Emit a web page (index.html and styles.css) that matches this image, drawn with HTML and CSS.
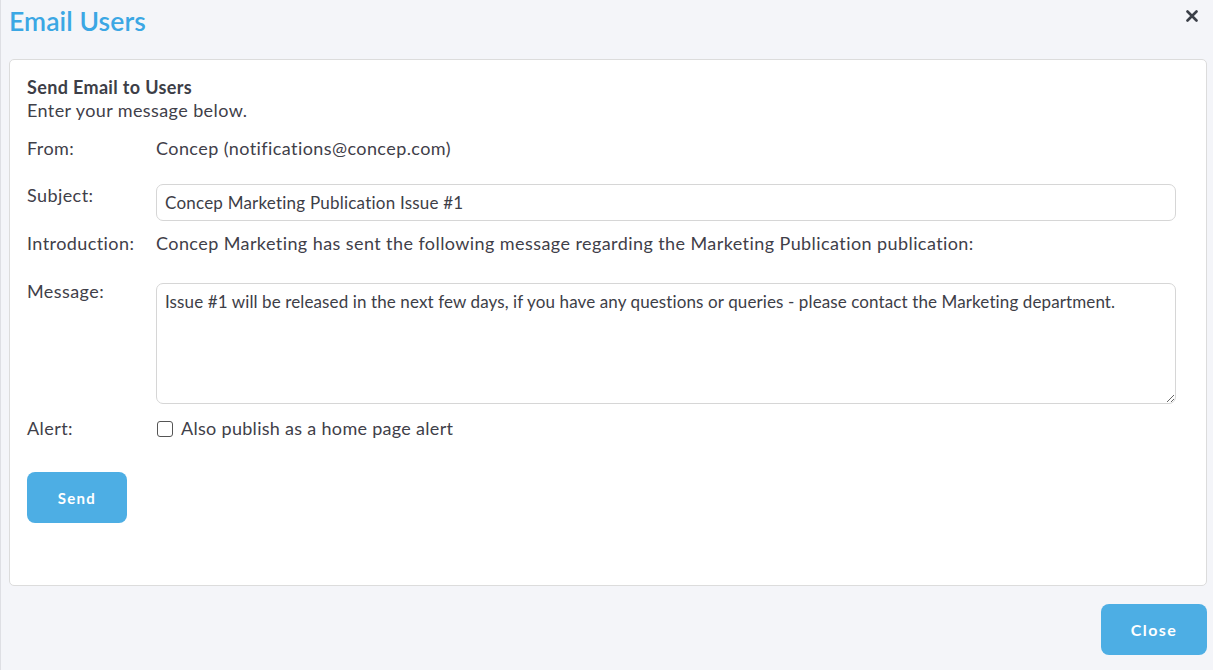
FILE: index.html
```html
<!DOCTYPE html>
<html lang="en">
<head>
<meta charset="utf-8">
<title>Email Users</title>
<link rel="stylesheet" href="styles.css">
</head>
<body>
<div class="modal">
  <header class="modal-header">
    <h1 class="modal-title">Email Users</h1>
    <button class="close-x" aria-label="Close">
      <svg width="12" height="12" viewBox="0 0 12 12"><path d="M1.5 1.5 L10.5 10.5 M10.5 1.5 L1.5 10.5" stroke="#3b3f48" stroke-width="2.6" stroke-linecap="round"/></svg>
    </button>
  </header>
  <section class="card">
    <h2 class="card-title">Send Email to Users</h2>
    <p class="card-sub">Enter your message below.</p>
    <div class="row row-from">
      <div class="label">From:</div>
      <div class="value">Concep (notifications@concep.com)</div>
    </div>
    <div class="row row-subject">
      <div class="label">Subject:</div>
      <input class="field" type="text" value="Concep Marketing Publication Issue #1">
    </div>
    <div class="row row-intro">
      <div class="label">Introduction:</div>
      <div class="value">Concep Marketing has sent the following message regarding the Marketing Publication publication:</div>
    </div>
    <div class="row row-message">
      <div class="label label-msg">Message:</div>
      <textarea class="field area">Issue #1 will be released in the next few days, if you have any questions or queries - please contact the Marketing department.</textarea>
    </div>
    <div class="row row-alert">
      <div class="label">Alert:</div>
      <label class="check"><input type="checkbox" class="checkbox"><span>Also publish as a home page alert</span></label>
    </div>
    <button class="btn btn-send">Send</button>
  </section>
  <footer class="modal-footer">
    <button class="btn btn-close">Close</button>
  </footer>
</div>
</body>
</html>
```
FILE: styles.css
```css
* { box-sizing: border-box; }
html, body { margin: 0; padding: 0; }
body {
  background: #f4f5f9;
  font-family: Lato, "Open Sans", sans-serif;
  color: #3f4049;
  width: 1213px;
  height: 670px;
  overflow: hidden;
}
.modal {
  height: 670px;
  border-left: 1px solid #dedfe4;
  padding: 0 6px 0 8px;
}
.modal-header {
  display: flex;
  align-items: flex-start;
  justify-content: space-between;
  height: 59px;
}
.modal-title {
  margin: 5px 0 0 0;
  font-size: 26.5px;
  font-weight: 600;
  color: #3ba7e4;
  line-height: 32px;
  letter-spacing: 0.1px;
}
.close-x {
  background: none;
  border: 0;
  padding: 0;
  margin: 10px 9px 0 0;
  width: 12px;
  height: 12px;
  display: flex;
  cursor: pointer;
}
.card {
  background: #fff;
  border: 1px solid #dcdcdc;
  border-radius: 5px;
  height: 527px;
  padding: 16px 17px 0 17px;
}
.card-title {
  margin: 0;
  font-size: 18px;
  font-weight: 700;
  line-height: 23px;
  letter-spacing: 0.35px;
  color: #3d3e47;
}
.card-sub {
  margin: 0;
  font-size: 18px;
  line-height: 23px;
  letter-spacing: 0.4px;
}
.row {
  display: flex;
  align-items: flex-start;
  font-size: 18px;
  line-height: 23px;
  letter-spacing: 0.42px;
}
.label {
  width: 129px;
  flex: none;
}
.value { flex: 1; }
.row-from { margin-top: 15px; }
.row-subject { margin-top: 24px; }
.row-intro { margin-top: 11px; }
.row-message { margin-top: 25px; }
.row-message .area { margin-top: 3px; }
.row-alert { margin-top: 13px; }
.field {
  width: 1020px;
  font-family: Lato, "Open Sans", sans-serif;
  font-size: 17px;
  letter-spacing: 0.11px;
  color: #3d3e47;
  border: 1px solid #d6d6d6;
  border-radius: 7px;
  background: #fff;
  outline: none;
}
input.field {
  height: 37px;
  padding: 0 8px;
  letter-spacing: 0.22px;
}
.area {
  height: 121px;
  padding: 6px 8px;
  line-height: 23px;
  resize: vertical;
}
.check {
  display: flex;
  align-items: center;
  gap: 8px;
  margin-left: 1px;
  letter-spacing: 0.3px;
}
.checkbox {
  appearance: none;
  -webkit-appearance: none;
  width: 16px;
  height: 16px;
  margin: 0;
  border: 1.5px solid #555;
  border-radius: 3px;
  background: #fff;
}
.btn {
  border: 0;
  background: #4daee4;
  color: #fff;
  font-family: Lato, "Open Sans", sans-serif;
  font-weight: 700;
  font-size: 15px;
  letter-spacing: 1.3px;
  border-radius: 8px;
  cursor: pointer;
}
.btn-send {
  display: block;
  margin-top: 32px;
  width: 100px;
  height: 51px;
}
.modal-footer {
  display: flex;
  justify-content: flex-end;
  padding-top: 18px;
}
.btn-close {
  width: 106px;
  height: 51px;
  font-size: 16px;
  letter-spacing: 1.4px;
}
```
